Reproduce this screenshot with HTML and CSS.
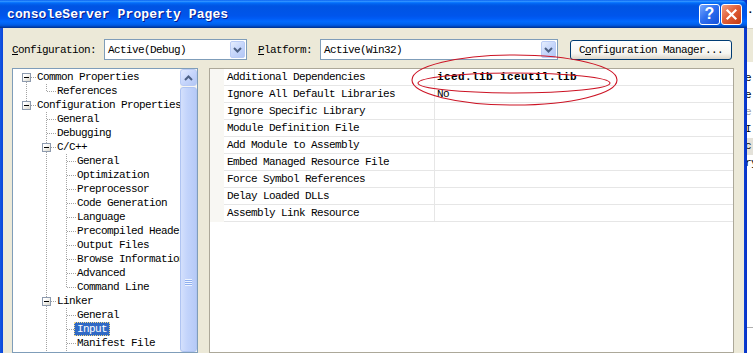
FILE: index.html
```html
<!DOCTYPE html>
<html>
<head>
<meta charset="utf-8">
<title>consoleServer Property Pages</title>
<link rel="stylesheet" href="styles.css">
</head>
<body>
<div class="page">
  <div class="dialog">
    <div class="titlebar">
      <span class="title">consoleServer Property Pages</span>
      <div class="tbtns">
        <span class="tb help">?</span>
        <span class="tb close"><svg width="13" height="13" viewBox="0 0 13 13"><path d="M2.5 2.5 L10.5 10.5 M10.5 2.5 L2.5 10.5" stroke="#fff" stroke-width="2.2" stroke-linecap="square"/></svg></span>
      </div>
    </div>
    <div class="client">
      <div class="toolbar">
        <span class="lbl cfg-lbl"><u>C</u>onfiguration:</span>
        <div class="combo combo-cfg"><span class="combo-text">Active(Debug)</span><span class="dd"><svg width="9" height="6" viewBox="0 0 9 6"><polyline points="1,1 4.5,4.5 8,1" fill="none" stroke="#4D6185" stroke-width="2"/></svg></span></div>
        <span class="lbl plat-lbl"><u>P</u>latform:</span>
        <div class="combo combo-plat"><span class="combo-text">Active(Win32)</span><span class="dd"><svg width="9" height="6" viewBox="0 0 9 6"><polyline points="1,1 4.5,4.5 8,1" fill="none" stroke="#4D6185" stroke-width="2"/></svg></span></div>
        <button class="btn">C<u>o</u>nfiguration Manager...</button>
      </div>
      <div class="panes">
        <div class="tree">
          <div class="tree-items">
            <div class="trow"><span class="g ed"><span class="box"></span></span><span class="lb">Common Properties</span></div>
            <div class="trow"><span class="g v"></span><span class="g c"></span><span class="lb">References</span></div>
            <div class="trow"><span class="g eu"><span class="box"></span></span><span class="lb">Configuration Properties</span></div>
            <div class="trow"><span class="g"></span><span class="g t"></span><span class="lb">General</span></div>
            <div class="trow"><span class="g"></span><span class="g t"></span><span class="lb">Debugging</span></div>
            <div class="trow"><span class="g"></span><span class="g ef"><span class="box"></span></span><span class="lb">C/C++</span></div>
            <div class="trow"><span class="g"></span><span class="g v"></span><span class="g t"></span><span class="lb">General</span></div>
            <div class="trow"><span class="g"></span><span class="g v"></span><span class="g t"></span><span class="lb">Optimization</span></div>
            <div class="trow"><span class="g"></span><span class="g v"></span><span class="g t"></span><span class="lb">Preprocessor</span></div>
            <div class="trow"><span class="g"></span><span class="g v"></span><span class="g t"></span><span class="lb">Code Generation</span></div>
            <div class="trow"><span class="g"></span><span class="g v"></span><span class="g t"></span><span class="lb">Language</span></div>
            <div class="trow"><span class="g"></span><span class="g v"></span><span class="g t"></span><span class="lb">Precompiled Headers</span></div>
            <div class="trow"><span class="g"></span><span class="g v"></span><span class="g t"></span><span class="lb">Output Files</span></div>
            <div class="trow"><span class="g"></span><span class="g v"></span><span class="g t"></span><span class="lb">Browse Information</span></div>
            <div class="trow"><span class="g"></span><span class="g v"></span><span class="g t"></span><span class="lb">Advanced</span></div>
            <div class="trow"><span class="g"></span><span class="g v"></span><span class="g c"></span><span class="lb">Command Line</span></div>
            <div class="trow"><span class="g"></span><span class="g ef"><span class="box"></span></span><span class="lb">Linker</span></div>
            <div class="trow"><span class="g"></span><span class="g v"></span><span class="g t"></span><span class="lb">General</span></div>
            <div class="trow"><span class="g"></span><span class="g v"></span><span class="g t"></span><span class="lb sel">Input</span></div>
            <div class="trow"><span class="g"></span><span class="g v"></span><span class="g t"></span><span class="lb">Manifest File</span></div>
            <div class="trow"><span class="g"></span><span class="g v"></span><span class="g t"></span><span class="lb">Debugging</span></div>
          </div>
          <div class="sb">
            <div class="sb-up"><svg width="9" height="6" viewBox="0 0 9 6"><polyline points="1,5 4.5,1.5 8,5" fill="none" stroke="#4D6185" stroke-width="2"/></svg></div>
            <div class="sb-thumb"><div class="grip"></div></div>
          </div>
        </div>
        <div class="grid">
          <div class="prow"><span class="pm"></span><span class="pn">Additional Dependencies</span><span class="pv"><b>iced.lib iceutil.lib</b></span></div>
          <div class="prow"><span class="pm"></span><span class="pn">Ignore All Default Libraries</span><span class="pv">No</span></div>
          <div class="prow"><span class="pm"></span><span class="pn">Ignore Specific Library</span><span class="pv"></span></div>
          <div class="prow"><span class="pm"></span><span class="pn">Module Definition File</span><span class="pv"></span></div>
          <div class="prow"><span class="pm"></span><span class="pn">Add Module to Assembly</span><span class="pv"></span></div>
          <div class="prow"><span class="pm"></span><span class="pn">Embed Managed Resource File</span><span class="pv"></span></div>
          <div class="prow"><span class="pm"></span><span class="pn">Force Symbol References</span><span class="pv"></span></div>
          <div class="prow"><span class="pm"></span><span class="pn">Delay Loaded DLLs</span><span class="pv"></span></div>
          <div class="prow"><span class="pm"></span><span class="pn">Assembly Link Resource</span><span class="pv"></span></div>
        </div>
      </div>
    </div>
  </div>
  <div class="behind">
    <div class="bh-top">.</div>
    <div class="bh-bar"></div>
    <div class="bh-gap"></div>
    <div class="bh-line">e</div>
    <div class="bh-line">e</div>
    <div class="bh-line dim">e</div>
    <div class="bh-line">I</div>
    <div class="bh-line shade">c</div>
    <div class="bh-line">ry</div>
    <div class="bh-rule"></div>
  </div>
  <svg class="annot" width="230" height="65" viewBox="0 0 230 65">
    <ellipse cx="114.5" cy="30" rx="102.5" ry="25" fill="none" stroke="#CC1425" stroke-width="1.1"/>
    <ellipse cx="114" cy="33" rx="96" ry="10" fill="none" stroke="#CC1425" stroke-width="1.1"/>
  </svg>
</div>
</body>
</html>
```

FILE: styles.css
```css
* { box-sizing: border-box; }
html, body { margin: 0; padding: 0; background: #fff; }
body {
  font-family: "Liberation Mono", "DejaVu Sans Mono", monospace;
  font-size: 11px;
  letter-spacing: -0.6px;
  color: #000;
}
.page {
  position: relative;
  display: flex;
  width: 753px;
  height: 353px;
  overflow: hidden;
}
.dialog {
  width: 747px;
  height: 353px;
  flex: none;
  display: flex;
  flex-direction: column;
  background: linear-gradient(90deg, #1457E2 0, #0A45DA 3px, #0A3FD4 744px, #0730C4 747px);
  overflow: hidden;
}
.titlebar {
  height: 28px;
  flex: none;
  display: flex;
  align-items: center;
  padding: 0 5px 0 7px;
  border-top-right-radius: 7px;
  background: linear-gradient(180deg, #0058EE 0%, #3593FF 4%, #288EFF 6%, #127DFF 8%, #036FFC 10%, #0262EE 14%, #0057E5 20%, #0054E3 24%, #0055EB 56%, #005BF5 66%, #026AFE 76%, #0062EF 86%, #0052D6 92%, #0040AB 96%, #003092 100%);
}
.title {
  color: #fff;
  font-weight: bold;
  font-size: 13px;
  letter-spacing: 0.1px;
  text-shadow: 1px 1px 0 #0A1A8A;
}
.tbtns { margin-left: auto; display: flex; gap: 1px; }
.tb {
  width: 21px;
  height: 21px;
  border: 1px solid #fff;
  border-radius: 3px;
  display: flex;
  align-items: center;
  justify-content: center;
  color: #fff;
}
.help {
  background: linear-gradient(135deg, #78A8FF 0%, #2F6FEF 45%, #1450DA 100%);
  font-family: "Liberation Sans", Arial, sans-serif;
  font-weight: bold;
  font-size: 16px;
  letter-spacing: 0;
}
.close {
  background: linear-gradient(135deg, #F2A084 0%, #E2603A 45%, #C33A12 100%);
}
.client {
  flex: 1;
  min-height: 0;
  margin: 0 3px;
  background: #ECE9D8;
  padding: 11px 10px 0 9px;
  display: flex;
  flex-direction: column;
}
.toolbar {
  height: 21px;
  flex: none;
  display: flex;
  align-items: center;
}
.lbl { white-space: nowrap; }
.cfg-lbl { width: 84px; margin-right: 8px; }
.plat-lbl { width: 54px; margin-left: 11px; margin-right: 8px; }
.combo {
  height: 21px;
  border: 1px solid #7F9DB9;
  background: #fff;
  display: flex;
  align-items: center;
  padding-left: 3px;
}
.combo-cfg { width: 143px; }
.combo-plat { width: 238px; }
.dd {
  margin-left: auto;
  width: 15px;
  height: 17px;
  margin-right: 1px;
  border: 1px solid #BACCF6;
  border-radius: 2px;
  background: linear-gradient(135deg, #E6EEFD 0%, #C6D6FB 50%, #B3C7F5 100%);
  display: flex;
  align-items: center;
  justify-content: center;
}
.btn {
  margin-left: 12px;
  width: 162px;
  height: 20px;
  padding: 0;
  border: 1px solid #003C74;
  border-radius: 3px;
  background: linear-gradient(180deg, #FFFFFF 0%, #F6F5F0 70%, #DCD6CA 100%);
  font-family: inherit;
  font-size: 11px;
  letter-spacing: -0.6px;
  color: #000;
  text-align: center;
}
.panes {
  margin-top: 8px;
  flex: 1;
  min-height: 0;
  display: flex;
  gap: 11px;
}
.tree {
  width: 186px;
  flex: none;
  border: 1px solid #7F9DB9;
  background: #fff;
  display: flex;
}
.tree-items {
  width: 167px;
  flex: none;
  padding: 1px 0 0 3px;
  overflow: hidden;
  white-space: nowrap;
}
.trow {
  display: flex;
  height: 14px;
  line-height: 15px;
}
.g {
  --vd: repeating-linear-gradient(180deg, #A3A3A3 0 1px, transparent 1px 2px);
  --hd: repeating-linear-gradient(90deg, #A3A3A3 0 1px, transparent 1px 2px);
  width: 20px;
  height: 14px;
  flex: none;
  display: block;
}
.v { background: var(--vd) 10px 0 / 1px 14px no-repeat; }
.t { background: var(--vd) 10px 0 / 1px 14px no-repeat, var(--hd) 11px 7px / 9px 1px no-repeat; }
.c { background: var(--vd) 10px 0 / 1px 7px no-repeat, var(--hd) 11px 7px / 9px 1px no-repeat; }
.ed { background: var(--vd) 10px 8px / 1px 6px no-repeat, var(--hd) 11px 7px / 9px 1px no-repeat; }
.eu { background: var(--vd) 10px 0 / 1px 7px no-repeat, var(--hd) 11px 7px / 9px 1px no-repeat; }
.ef { background: var(--vd) 10px 0 / 1px 14px no-repeat, var(--hd) 11px 7px / 9px 1px no-repeat; }
.box {
  display: flex;
  align-items: center;
  justify-content: center;
  width: 9px;
  height: 9px;
  margin: 3px 0 0 6px;
  border: 1px solid #8E9BAE;
  background: linear-gradient(135deg, #FFFFFF 25%, #D9D6CA 100%);
}
.box::after {
  content: "";
  width: 5px;
  height: 1px;
  background: #000;
}
.lb {
  margin-left: -1px;
  padding: 0 2px;
  height: 14px;
}
.sel {
  margin-left: -2px;
  padding: 0 3px;
  background: #316AC5;
  color: #fff;
  outline: 1px dotted #F3D98A;
  outline-offset: -1px;
}
.sb {
  width: 17px;
  flex: none;
  display: flex;
  flex-direction: column;
  background: #F7F6F2;
}
.sb-up {
  height: 17px;
  flex: none;
  border: 1px solid #B9CBF5;
  border-radius: 3px;
  background: linear-gradient(135deg, #E3EBFE 0%, #C7D6FC 50%, #B2C6F4 100%);
  display: flex;
  align-items: center;
  justify-content: center;
}
.sb-thumb {
  flex: 1;
  margin-top: 1px;
  border: 1px solid #AFC4F2;
  border-radius: 3px;
  background: linear-gradient(90deg, #D4E0FC 0%, #C3D4FB 40%, #B6CAF7 100%);
  display: flex;
  flex-direction: column;
  align-items: center;
}
.grip {
  margin-top: 191px;
  width: 7px;
  height: 7px;
  background: repeating-linear-gradient(180deg, #EEF4FE 0 1px, #8EAEEE 1px 2px);
}
.grid {
  flex: 1;
  border: 1px solid #ACA899;
  background: #fff;
  display: flex;
  flex-direction: column;
}
.prow {
  display: flex;
  height: 17px;
  flex: none;
  white-space: nowrap;
}
.pm { width: 14px; flex: none; background: #F8F7F3; }
.pn {
  width: 211px;
  flex: none;
  border-right: 1px solid #E6E6E6;
  border-bottom: 1px solid #E6E6E6;
  padding: 1px 0 0 3px;
  line-height: 15px;
  overflow: hidden;
}
.pv {
  flex: 1;
  border-bottom: 1px solid #E6E6E6;
  padding: 1px 0 0 2px;
  line-height: 15px;
  overflow: hidden;
}
.pv b { font-weight: bold; letter-spacing: 0.4px; }
.behind {
  flex: 1;
  background: #fff;
  display: flex;
  flex-direction: column;
  overflow: hidden;
  white-space: nowrap;
}
.bh-top { height: 28px; line-height: 20px; font-weight: bold; }
.bh-bar { height: 34px; background: #ECE9D8; border-top: 1px solid #D6D2C2; }
.bh-gap { height: 8px; }
.bh-line { height: 17px; line-height: 17px; text-indent: -2px; }
.dim { color: #A0A0A0; }
.shade { background: #E4E2DA; }
.bh-rule { margin-top: 155px; height: 1px; background: #B0B0B0; }
.annot {
  position: absolute;
  left: 400px;
  top: 50px;
  pointer-events: none;
}
```
